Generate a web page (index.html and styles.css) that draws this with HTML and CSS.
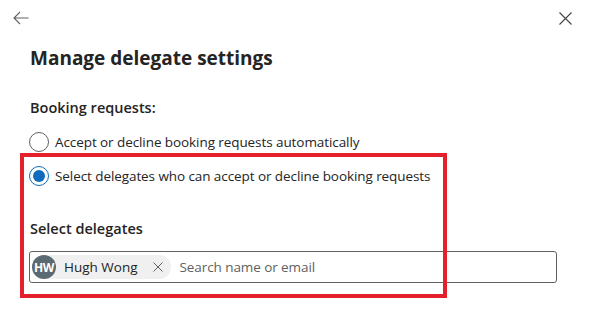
FILE: index.html
```html
<!DOCTYPE html>
<html>
<head>
<meta charset="utf-8">
<link rel="stylesheet" href="styles.css">
</head>
<body>
<div class="panel">
  <div class="topbar">
    <button class="icon-btn" aria-label="Back">
      <svg width="16" height="14" viewBox="0 0 16 14"><path d="M7 1 L1 7 L7 13 M1 7 H15.5" fill="none" stroke="#616161" stroke-width="1.1"/></svg>
    </button>
    <button class="icon-btn" aria-label="Close">
      <svg width="13" height="13" viewBox="0 0 13 13"><path d="M0.5 0.5 L12.5 12.5 M12.5 0.5 L0.5 12.5" fill="none" stroke="#424242" stroke-width="1.1"/></svg>
    </button>
  </div>
  <div class="content">
    <h1 class="title">Manage delegate settings</h1>
    <div class="label">Booking requests:</div>
    <div class="options">
      <label class="option"><span class="radio"></span><span>Accept or decline booking requests automatically</span></label>
      <label class="option"><span class="radio checked"></span><span>Select delegates who can accept or decline booking requests</span></label>
    </div>
    <div class="label delegates">Select delegates</div>
    <div class="picker">
      <span class="chip"><span class="avatar">HW</span><span class="chip-name">Hugh Wong</span>
        <svg class="chip-x" width="10" height="10" viewBox="0 0 10 10"><path d="M0.5 0.5 L9.5 9.5 M9.5 0.5 L0.5 9.5" fill="none" stroke="#616161" stroke-width="1"/></svg>
      </span>
      <span class="placeholder">Search name or email</span>
    </div>
  </div>
  <div class="highlight"></div>
</div>
</body>
</html>
```
FILE: styles.css
```css
* { box-sizing: border-box; }
html, body { margin: 0; padding: 0; background: #fff; }
body { font-family: "Open Sans", "Noto Sans", sans-serif; color: #242424; }
.panel { position: relative; width: 589px; height: 315px; overflow: hidden; }
.topbar { display: flex; justify-content: space-between; align-items: center; height: 36px; padding: 0 17px 0 13px; }
.icon-btn { border: 0; background: none; padding: 0; display: flex; align-items: center; }
.content { padding-left: 30px; }
.title { margin: 9px 0 0; font-size: 19px; font-weight: 700; line-height: 26px; letter-spacing: 0; }
.label { margin-top: 27px; font-size: 14.5px; font-weight: 600; line-height: 20px; letter-spacing: 0; }
.options { display: flex; flex-direction: column; gap: 14px; margin-top: 14px; margin-left: -1px; }
.option { display: flex; align-items: center; gap: 6px; font-size: 13.5px; line-height: 20px; letter-spacing: -0.08px; }
.radio { width: 20px; height: 20px; border-radius: 50%; border: 1px solid #616161; display: flex; align-items: center; justify-content: center; flex: none; }
.radio.checked { border-color: #0f6cbd; }
.radio.checked::after { content: ""; width: 12px; height: 12px; border-radius: 50%; background: #0f6cbd; }
.delegates { margin-top: 33px; }
.picker { margin-top: 12px; margin-left: -1px; width: 528px; height: 32px; border: 1px solid #616161; border-radius: 3px; display: flex; align-items: center; padding-left: 2px; gap: 9px; }
.chip { display: flex; align-items: center; height: 24px; background: #f0f0f0; border-radius: 12px; padding-right: 8px; }
.avatar { width: 24px; height: 24px; border-radius: 50%; background: #5c6b73; color: #fff; font-size: 12px; font-weight: 700; display: flex; align-items: center; justify-content: center; letter-spacing: -0.4px; }
.chip-name { margin-left: 8px; font-size: 13.5px; letter-spacing: 0; }
.chip-x { margin-left: 15px; }
.placeholder { font-size: 13.5px; color: #616161; letter-spacing: -0.08px; }
.highlight { position: absolute; left: 20px; top: 153px; width: 427px; height: 145px; border: 4px solid #e3202c; pointer-events: none; }
```
